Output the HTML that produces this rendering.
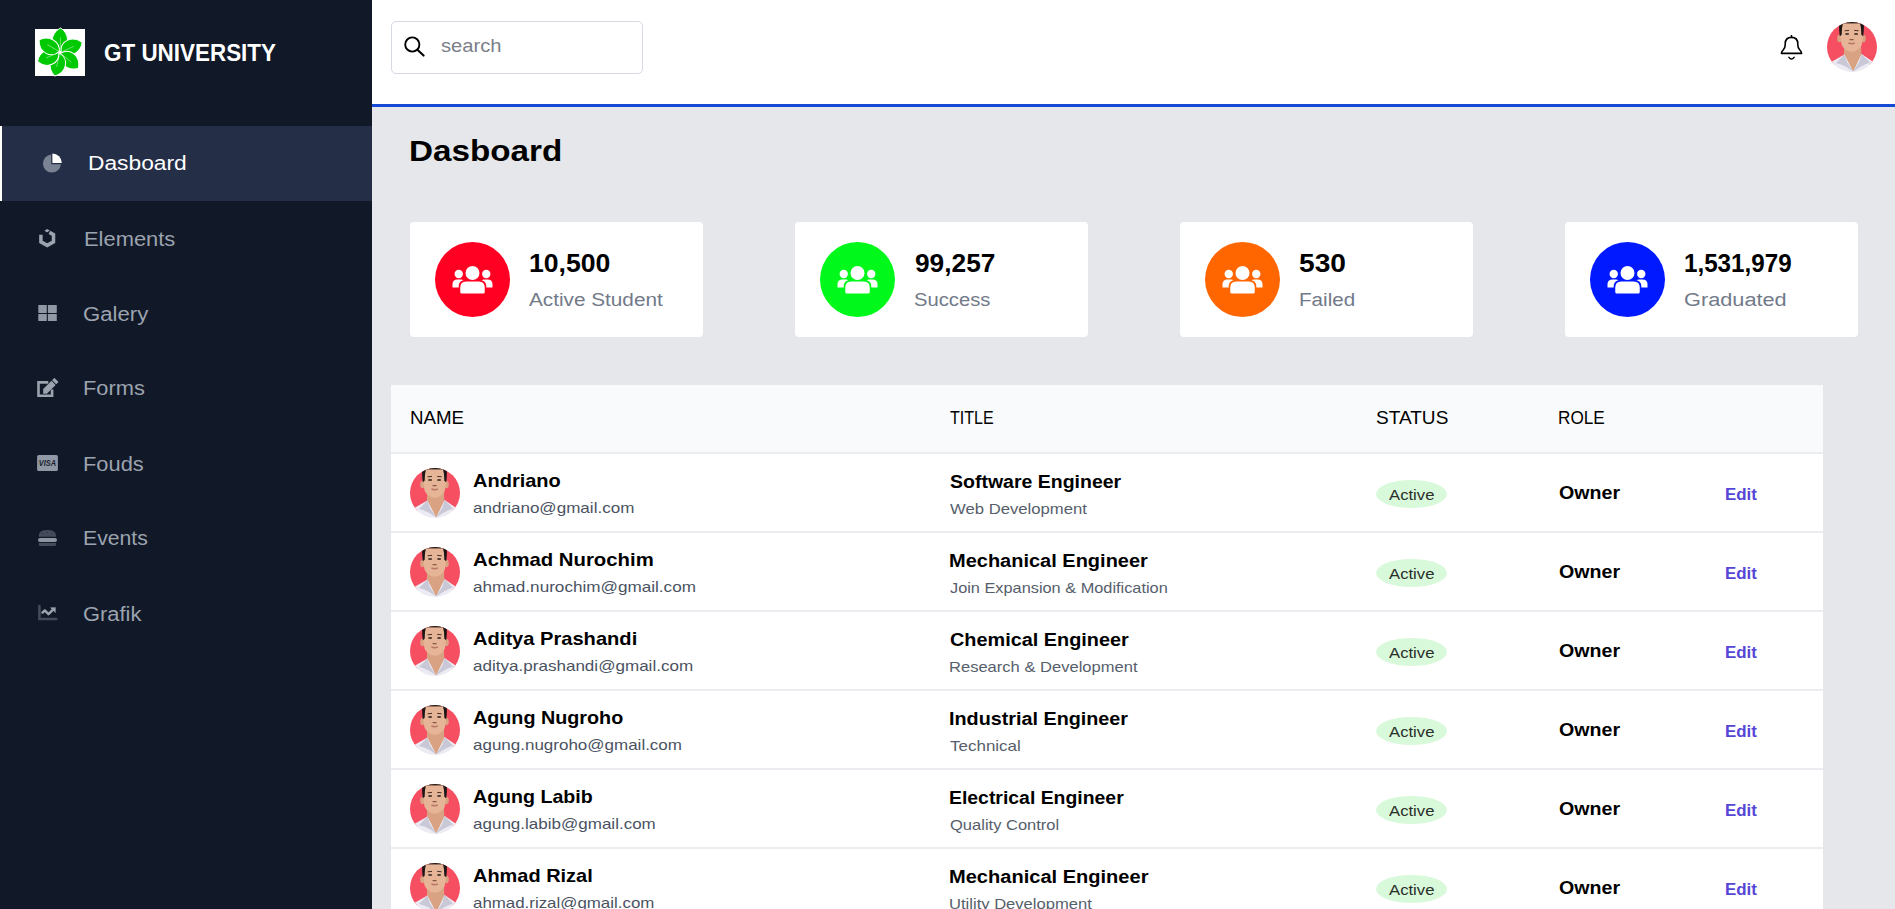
<!DOCTYPE html>
<html><head><meta charset="utf-8">
<style>
*{box-sizing:border-box;margin:0;padding:0}
html,body{width:1895px;height:909px;overflow:hidden;background:#e5e7eb;font-family:"Liberation Sans",sans-serif}
.tx{position:absolute;white-space:nowrap}
.b{position:absolute}
</style></head><body>
<svg width="0" height="0" style="position:absolute">
<defs>
<clipPath id="cp"><circle cx="25" cy="25" r="25"/></clipPath>
<symbol id="face" viewBox="0 0 50 50">
<g clip-path="url(#cp)">
<rect width="50" height="43" fill="#f64f62"/>
<path d="M17.2 24 L34 24 L34.5 40 L26.5 50 L16.5 40Z" fill="#d9a283"/>
<path d="M0 41.5 Q3 39.5 5.6 39.2 L17.4 32.4 L26.2 49.5 L34.6 32 L45.2 39.2 Q48 40 50 41.5 L50 50 L0 50Z" fill="#ecebf3"/>
<path d="M17.4 32.4 L20 40 L26.2 49.5 L19.5 45 Q14 42 9 41 Z" fill="#c9c8d6"/>
<path d="M34.6 32 L32.2 40 L26.2 49.5 L33 45 Q38 42 43 40.5 Z" fill="#c9c8d6"/>
<ellipse cx="12.4" cy="16.5" rx="2.2" ry="3.8" fill="#d9a283"/>
<ellipse cx="36.6" cy="16.5" rx="2.2" ry="3.8" fill="#d9a283"/>
<path d="M13 2 Q13 -2 24.5 -2 Q36 -2 36 2 L35.7 18 Q35 28.5 24.8 29.8 Q14.5 28.5 13.6 18Z" fill="#e6b496"/>
<path d="M12.4 -1 L16.6 -1 Q14.6 5 14.7 12.8 L12.8 14.2 Q11.6 6 12.4 -1Z" fill="#1c1716"/>
<path d="M36.6 -1 L32.4 -1 Q34.4 5 34.3 12.8 L36.2 14.2 Q37.4 6 36.6 -1Z" fill="#1c1716"/>
<rect x="12.6" y="-1" width="24" height="2.4" fill="#1c1716"/>
<path d="M17.6 8.8 L22 8.4 M27.2 8.4 L31.6 8.8" stroke="#4a3028" stroke-width="1"/>
<path d="M18.4 12 L21.8 12 M27.4 12 L30.8 12" stroke="#2a1e1c" stroke-width="1.4"/>
<path d="M22.6 17.6 L26.6 17.6" stroke="#8a5a48" stroke-width="1.2"/>
<path d="M21.4 21 Q24.6 22.4 27.8 21" stroke="#b97566" stroke-width="1.5" fill="none"/>
</g>
</symbol>
<symbol id="users" viewBox="0 0 41 30">
<path d="M0.5 22.5 L0.5 19.5 Q0.5 14.5 5.5 14.5 L9 14.5 Q12 14.5 12 17.5 L12 22.5Z" fill="#fff"/>
<path d="M40.5 22.5 L40.5 19.5 Q40.5 14.5 35.5 14.5 L32 14.5 Q29 14.5 29 17.5 L29 22.5Z" fill="#fff"/>
<path d="M6.7 30 L6.7 21.5 Q6.7 14.9 13.3 14.9 L27.7 14.9 Q34.3 14.9 34.3 21.5 L34.3 30Z" fill="currentColor"/>
<path d="M8.25 27 L8.25 22.5 Q8.25 16.5 14.25 16.5 L26.75 16.5 Q32.75 16.5 32.75 22.5 L32.75 27 Q32.75 28.5 31.25 28.5 L9.75 28.5 Q8.25 28.5 8.25 27Z" fill="#fff"/>
<circle cx="6.75" cy="9" r="4.2" fill="#fff"/>
<circle cx="34.25" cy="9" r="4.2" fill="#fff"/>
<circle cx="20.5" cy="8" r="7" fill="#fff"/>
</symbol>
</defs>
</svg>
<!-- sidebar -->
<div class="b" style="left:0;top:0;width:372px;height:909px;background:#111827"></div>
<div class="b" style="left:35px;top:29px;width:50px;height:47px;background:#fff"></div>
<div class="b" style="left:0;top:126px;width:372px;height:75px;background:#242e47"></div>
<div class="b" style="left:0;top:126px;width:2px;height:75px;background:#fff"></div>
<!-- header -->
<div class="b" style="left:372px;top:0;width:1523px;height:104px;background:#fff"></div>
<div class="b" style="left:372px;top:104px;width:1523px;height:3px;background:#144ad4"></div>
<div class="b" style="left:391px;top:21px;width:252px;height:53px;border:1px solid #d5d9e2;border-radius:5px;background:#fff"></div>
<!-- cards -->
<div class="b" style="left:410px;top:222px;width:293px;height:115px;background:#fff;border-radius:4px"></div>
<div class="b" style="left:795px;top:222px;width:293px;height:115px;background:#fff;border-radius:4px"></div>
<div class="b" style="left:1180px;top:222px;width:293px;height:115px;background:#fff;border-radius:4px"></div>
<div class="b" style="left:1565px;top:222px;width:293px;height:115px;background:#fff;border-radius:4px"></div>
<div class="b" style="left:435px;top:242px;width:75px;height:75px;border-radius:50%;background:#ff0022"></div>
<div class="b" style="left:820px;top:242px;width:75px;height:75px;border-radius:50%;background:#00f81a"></div>
<div class="b" style="left:1205px;top:242px;width:75px;height:75px;border-radius:50%;background:#ff6600"></div>
<div class="b" style="left:1590px;top:242px;width:75px;height:75px;border-radius:50%;background:#0019ff"></div>
<svg class="b" style="left:452px;top:265px;color:#ff0022;overflow:visible" width="41" height="30"><use href="#users"/></svg>
<svg class="b" style="left:837px;top:265px;color:#00f81a;overflow:visible" width="41" height="30"><use href="#users"/></svg>
<svg class="b" style="left:1222px;top:265px;color:#ff6600;overflow:visible" width="41" height="30"><use href="#users"/></svg>
<svg class="b" style="left:1607px;top:265px;color:#0019ff;overflow:visible" width="41" height="30"><use href="#users"/></svg>
<!-- table -->
<div class="b" style="left:391px;top:385px;width:1432px;height:524px;background:#fff"></div>
<div class="b" style="left:391px;top:385px;width:1432px;height:67px;background:#f9fafb"></div>
<div class="b" style="left:391px;top:452px;width:1432px;height:2px;background:#ebedf0"></div>
<div class="b" style="left:391px;top:531px;width:1432px;height:2px;background:#ebedf0"></div>
<div class="b" style="left:391px;top:610px;width:1432px;height:2px;background:#ebedf0"></div>
<div class="b" style="left:391px;top:689px;width:1432px;height:2px;background:#ebedf0"></div>
<div class="b" style="left:391px;top:768px;width:1432px;height:2px;background:#ebedf0"></div>
<div class="b" style="left:391px;top:847px;width:1432px;height:2px;background:#ebedf0"></div>
<svg class="b" style="left:410px;top:468px" width="50" height="50" viewBox="0 0 50 50"><use href="#face"/></svg>
<div class="b" style="left:1376px;top:480px;width:71px;height:28px;border-radius:50%;background:#d9f9db"></div>
<svg class="b" style="left:410px;top:547px" width="50" height="50" viewBox="0 0 50 50"><use href="#face"/></svg>
<div class="b" style="left:1376px;top:559px;width:71px;height:28px;border-radius:50%;background:#d9f9db"></div>
<svg class="b" style="left:410px;top:626px" width="50" height="50" viewBox="0 0 50 50"><use href="#face"/></svg>
<div class="b" style="left:1376px;top:638px;width:71px;height:28px;border-radius:50%;background:#d9f9db"></div>
<svg class="b" style="left:410px;top:705px" width="50" height="50" viewBox="0 0 50 50"><use href="#face"/></svg>
<div class="b" style="left:1376px;top:717px;width:71px;height:28px;border-radius:50%;background:#d9f9db"></div>
<svg class="b" style="left:410px;top:784px" width="50" height="50" viewBox="0 0 50 50"><use href="#face"/></svg>
<div class="b" style="left:1376px;top:796px;width:71px;height:28px;border-radius:50%;background:#d9f9db"></div>
<svg class="b" style="left:410px;top:863px" width="50" height="50" viewBox="0 0 50 50"><use href="#face"/></svg>
<div class="b" style="left:1376px;top:875px;width:71px;height:28px;border-radius:50%;background:#d9f9db"></div>

<!-- icons -->
<svg class="b" style="left:0;top:0;overflow:visible" width="1895" height="909">
<g transform="translate(60 52.3)">
<g id="petal"><path d="M0.5 -1 C-11 -5 -10 -19 0.6 -24.3 C10.5 -18 9 -5 0.5 -1Z" fill="#00c803" stroke="#fff" stroke-width="1"/><path d="M0.3 -2 L0.5 -15" stroke="#fff" stroke-width="0.7" opacity="0.55"/></g>
<use href="#petal" transform="rotate(64.6)"/>
<use href="#petal" transform="rotate(129.4)"/>
<use href="#petal" transform="rotate(190.8)"/>
<use href="#petal" transform="rotate(246)"/>
<use href="#petal" transform="rotate(299.3)"/>
</g>
<!-- pie -->
<path d="M51.2 164.3 L51.2 154.6 A9 9 0 1 0 60.9 164.3Z" fill="#7b8294"/>
<path d="M52.4 162.9 L52.4 153.6 A9.4 9.4 0 0 1 61.8 162.9Z" fill="#fff"/>
<!-- uikit -->
<path d="M40.9 234.8 L40.9 241.9 L47.2 245.4 L53.5 241.9 L53.5 234.6 L49.4 232.4" fill="none" stroke="#9ca3af" stroke-width="3.5" stroke-linejoin="miter"/>
<path d="M44.4 230.8 L47.2 229.1 L50 230.8 L47.2 232.5Z" fill="#9ca3af"/><path d="M46 233.6 L49.6 231.4" stroke="#111827" stroke-width="0.9"/>
<!-- th-large -->
<rect x="38.3" y="304.9" width="8.5" height="8" rx="0.6" fill="#9097a5"/>
<rect x="47.9" y="304.9" width="8.9" height="8" rx="0.6" fill="#9097a5"/>
<rect x="38.3" y="313.9" width="8.5" height="7.1" rx="0.6" fill="#9097a5"/>
<rect x="47.9" y="313.9" width="8.9" height="7.1" rx="0.6" fill="#9097a5"/>
<!-- edit -->
<path d="M48.3 382.4 L38.5 382.4 L38.5 395.8 L52.1 395.8 L52.1 389.6" fill="none" stroke="#9ca3af" stroke-width="2.6"/>
<path d="M43.2 389.1 L51.5 380.8 L55.6 384.9 L46.9 393.7 L43.2 393.7Z" fill="#9ca3af"/>
<path d="M52.1 380.2 L54 378.3 Q54.4 377.9 54.8 378.3 L58.1 381.6 Q58.5 382 58.1 382.4 L56.2 384.3Z" fill="#9ca3af"/>
<!-- visa -->
<rect x="37.1" y="454.9" width="20.8" height="16.1" rx="1.6" fill="#9097a5"/>
<text x="38.8" y="466" font-family="Liberation Sans" font-weight="bold" font-style="italic" font-size="8.2" fill="#1a1f2e" textLength="17.2" lengthAdjust="spacingAndGlyphs">VISA</text>
<!-- burger -->
<path d="M38.8 536.8 L38.8 535.5 Q38.8 530 47.4 530 Q56 530 56 535.5 L56 536.8Z" fill="#444b5a"/>
<circle cx="42.7" cy="533.5" r="0.6" fill="#2b3142"/><circle cx="47.4" cy="532.4" r="0.6" fill="#2b3142"/><circle cx="51.8" cy="533.5" r="0.6" fill="#2b3142"/>
<rect x="38" y="537.9" width="19" height="4" rx="2" fill="#8d94a2"/>
<path d="M38.8 543 L56 543 L56 544.5 Q56 546 54.5 546 L40.3 546 Q38.8 546 38.8 544.5Z" fill="#444b5a"/>
<!-- chart -->
<path d="M39.4 606.1 L39.4 619 L56.3 619" fill="none" stroke="#444b5a" stroke-width="2.6" stroke-linecap="round"/>
<path d="M42.5 612.7 L44.8 610.4 L48.5 614.2 L52.5 610.2" fill="none" stroke="#9ca3af" stroke-width="2.4" stroke-linejoin="round" stroke-linecap="round"/>
<path d="M50 607.5 L55.6 607.3 L55.6 612.9Z" fill="#9ca3af"/>
<!-- search -->
<circle cx="412.3" cy="44.5" r="7.1" fill="none" stroke="#000" stroke-width="1.9"/>
<path d="M417.4 49.7 L423.6 55.6" stroke="#000" stroke-width="2.1" stroke-linecap="round"/>
<!-- bell -->
<path d="M1781.4 53.4 Q1781.4 51.6 1783.2 50 Q1785.2 48.2 1785.2 44.8 L1785.2 43.8 Q1785.2 37.4 1791.5 37.4 Q1797.8 37.4 1797.8 43.8 L1797.8 44.8 Q1797.8 48.2 1799.8 50 Q1801.6 51.6 1801.6 53.4Z" fill="none" stroke="#000" stroke-width="1.6" stroke-linejoin="round"/>
<path d="M1791.5 35 L1791.5 37.4" stroke="#000" stroke-width="1.5"/>
<path d="M1788.9 57.4 Q1791.5 60.8 1794.1 57.4" fill="none" stroke="#000" stroke-width="1.5" stroke-linecap="round"/>
</svg>
<svg class="b" style="left:1827px;top:22px" width="50" height="50" viewBox="0 0 50 50"><use href="#face"/></svg>
<div class="tx" id="brand" style="left:104.00px;top:40.88px;font:bold 24px 'Liberation Sans',sans-serif;line-height:1;color:#fff;letter-spacing:0.000px;transform:scaleX(0.9348);transform-origin:0 0">GT UNIVERSITY</div>
<div class="tx" id="nav0" style="left:88.40px;top:153.00px;font:20px 'Liberation Sans',sans-serif;line-height:1;color:#fff;letter-spacing:0.000px;transform:scaleX(1.1389);transform-origin:0 0">Dasboard</div>
<div class="tx" id="nav1" style="left:83.70px;top:229.10px;font:20px 'Liberation Sans',sans-serif;line-height:1;color:#9ca3af;letter-spacing:0.000px;transform:scaleX(1.0952);transform-origin:0 0">Elements</div>
<div class="tx" id="nav2" style="left:83.10px;top:304.20px;font:20px 'Liberation Sans',sans-serif;line-height:1;color:#9ca3af;letter-spacing:0.000px;transform:scaleX(1.1087);transform-origin:0 0">Galery</div>
<div class="tx" id="nav3" style="left:82.90px;top:378.40px;font:20px 'Liberation Sans',sans-serif;line-height:1;color:#9ca3af;letter-spacing:0.000px;transform:scaleX(1.0911);transform-origin:0 0">Forms</div>
<div class="tx" id="nav4" style="left:82.90px;top:454.20px;font:20px 'Liberation Sans',sans-serif;line-height:1;color:#9ca3af;letter-spacing:0.000px;transform:scaleX(1.0926);transform-origin:0 0">Fouds</div>
<div class="tx" id="nav5" style="left:82.90px;top:528.40px;font:20px 'Liberation Sans',sans-serif;line-height:1;color:#9ca3af;letter-spacing:0.000px;transform:scaleX(1.0602);transform-origin:0 0">Events</div>
<div class="tx" id="nav6" style="left:82.90px;top:604.20px;font:20px 'Liberation Sans',sans-serif;line-height:1;color:#9ca3af;letter-spacing:0.000px;transform:scaleX(1.0943);transform-origin:0 0">Grafik</div>
<div class="tx" id="search" style="left:441.30px;top:37.26px;font:18px 'Liberation Sans',sans-serif;line-height:1;color:#7a7f89;letter-spacing:0.000px;transform:scaleX(1.1209);transform-origin:0 0">search</div>
<div class="tx" id="h1" style="left:408.50px;top:136.40px;font:bold 30px 'Liberation Sans',sans-serif;line-height:1;color:#000;letter-spacing:0.000px;transform:scaleX(1.1074);transform-origin:0 0">Dasboard</div>
<div class="tx" id="cn0" style="left:528.50px;top:251.25px;font:bold 25px 'Liberation Sans',sans-serif;line-height:1;color:#000;letter-spacing:0.000px;transform:scaleX(1.0641);transform-origin:0 0">10,500</div>
<div class="tx" id="cl0" style="left:529.30px;top:290.66px;font:18px 'Liberation Sans',sans-serif;line-height:1;color:#727a89;letter-spacing:0.000px;transform:scaleX(1.1522);transform-origin:0 0">Active Student</div>
<div class="tx" id="cn1" style="left:914.80px;top:251.25px;font:bold 25px 'Liberation Sans',sans-serif;line-height:1;color:#000;letter-spacing:0.000px;transform:scaleX(1.0509);transform-origin:0 0">99,257</div>
<div class="tx" id="cl1" style="left:914.00px;top:290.66px;font:18px 'Liberation Sans',sans-serif;line-height:1;color:#727a89;letter-spacing:0.000px;transform:scaleX(1.1225);transform-origin:0 0">Success</div>
<div class="tx" id="cn2" style="left:1299.30px;top:251.25px;font:bold 25px 'Liberation Sans',sans-serif;line-height:1;color:#000;letter-spacing:0.000px;transform:scaleX(1.1271);transform-origin:0 0">530</div>
<div class="tx" id="cl2" style="left:1298.50px;top:290.66px;font:18px 'Liberation Sans',sans-serif;line-height:1;color:#727a89;letter-spacing:0.000px;transform:scaleX(1.1450);transform-origin:0 0">Failed</div>
<div class="tx" id="cn3" style="left:1683.60px;top:251.25px;font:bold 25px 'Liberation Sans',sans-serif;line-height:1;color:#000;letter-spacing:0.000px;transform:scaleX(0.9673);transform-origin:0 0">1,531,979</div>
<div class="tx" id="cl3" style="left:1683.60px;top:290.66px;font:18px 'Liberation Sans',sans-serif;line-height:1;color:#727a89;letter-spacing:0.000px;transform:scaleX(1.2072);transform-origin:0 0">Graduated</div>
<div class="tx" id="thName" style="left:409.70px;top:407.73px;font:19px 'Liberation Sans',sans-serif;line-height:1;color:#000;letter-spacing:0.000px;transform:scaleX(0.9853);transform-origin:0 0">NAME</div>
<div class="tx" id="thTitle" style="left:949.60px;top:407.73px;font:19px 'Liberation Sans',sans-serif;line-height:1;color:#000;letter-spacing:0.000px;transform:scaleX(0.8436);transform-origin:0 0">TITLE</div>
<div class="tx" id="thStatus" style="left:1375.80px;top:407.73px;font:19px 'Liberation Sans',sans-serif;line-height:1;color:#000;letter-spacing:0.000px;transform:scaleX(1.0029);transform-origin:0 0">STATUS</div>
<div class="tx" id="thRole" style="left:1558.20px;top:407.73px;font:19px 'Liberation Sans',sans-serif;line-height:1;color:#000;letter-spacing:0.000px;transform:scaleX(0.9020);transform-origin:0 0">ROLE</div>
<div class="tx" id="nm0" style="left:472.60px;top:471.23px;font:bold 19px 'Liberation Sans',sans-serif;line-height:1;color:#000;letter-spacing:0.000px;transform:scaleX(1.0531);transform-origin:0 0">Andriano</div>
<div class="tx" id="em0" style="left:472.60px;top:499.65px;font:15px 'Liberation Sans',sans-serif;line-height:1;color:#4a5262;letter-spacing:0.000px;transform:scaleX(1.1367);transform-origin:0 0">andriano@gmail.com</div>
<div class="tx" id="ti0" style="left:949.60px;top:472.66px;font:bold 18px 'Liberation Sans',sans-serif;line-height:1;color:#000;letter-spacing:0.000px;transform:scaleX(1.0830);transform-origin:0 0">Software Engineer</div>
<div class="tx" id="su0" style="left:949.60px;top:500.55px;font:15px 'Liberation Sans',sans-serif;line-height:1;color:#565e6b;letter-spacing:0.000px;transform:scaleX(1.1122);transform-origin:0 0">Web Development</div>
<div class="tx" id="pa0" style="left:1389.20px;top:486.65px;font:15px 'Liberation Sans',sans-serif;line-height:1;color:#2a2f2a;letter-spacing:0.000px;transform:scaleX(1.1123);transform-origin:0 0">Active</div>
<div class="tx" id="ow0" style="left:1559.30px;top:483.96px;font:bold 18px 'Liberation Sans',sans-serif;line-height:1;color:#000;letter-spacing:0.000px;transform:scaleX(1.0895);transform-origin:0 0">Owner</div>
<div class="tx" id="ed0" style="left:1725.20px;top:485.79px;font:bold 17px 'Liberation Sans',sans-serif;line-height:1;color:#5546d6;letter-spacing:0.000px;transform:scaleX(0.9943);transform-origin:0 0">Edit</div>
<div class="tx" id="nm1" style="left:472.60px;top:550.23px;font:bold 19px 'Liberation Sans',sans-serif;line-height:1;color:#000;letter-spacing:0.000px;transform:scaleX(1.0699);transform-origin:0 0">Achmad Nurochim</div>
<div class="tx" id="em1" style="left:472.60px;top:578.65px;font:15px 'Liberation Sans',sans-serif;line-height:1;color:#4a5262;letter-spacing:0.000px;transform:scaleX(1.1416);transform-origin:0 0">ahmad.nurochim@gmail.com</div>
<div class="tx" id="ti1" style="left:948.80px;top:551.66px;font:bold 18px 'Liberation Sans',sans-serif;line-height:1;color:#000;letter-spacing:0.000px;transform:scaleX(1.1106);transform-origin:0 0">Mechanical Engineer</div>
<div class="tx" id="su1" style="left:949.60px;top:579.55px;font:15px 'Liberation Sans',sans-serif;line-height:1;color:#565e6b;letter-spacing:0.000px;transform:scaleX(1.0880);transform-origin:0 0">Join Expansion &amp; Modification</div>
<div class="tx" id="pa1" style="left:1389.20px;top:565.65px;font:15px 'Liberation Sans',sans-serif;line-height:1;color:#2a2f2a;letter-spacing:0.000px;transform:scaleX(1.1123);transform-origin:0 0">Active</div>
<div class="tx" id="ow1" style="left:1559.30px;top:562.96px;font:bold 18px 'Liberation Sans',sans-serif;line-height:1;color:#000;letter-spacing:0.000px;transform:scaleX(1.0895);transform-origin:0 0">Owner</div>
<div class="tx" id="ed1" style="left:1725.20px;top:564.79px;font:bold 17px 'Liberation Sans',sans-serif;line-height:1;color:#5546d6;letter-spacing:0.000px;transform:scaleX(0.9943);transform-origin:0 0">Edit</div>
<div class="tx" id="nm2" style="left:472.60px;top:629.23px;font:bold 19px 'Liberation Sans',sans-serif;line-height:1;color:#000;letter-spacing:0.000px;transform:scaleX(1.0581);transform-origin:0 0">Aditya Prashandi</div>
<div class="tx" id="em2" style="left:472.60px;top:657.65px;font:15px 'Liberation Sans',sans-serif;line-height:1;color:#4a5262;letter-spacing:0.000px;transform:scaleX(1.1368);transform-origin:0 0">aditya.prashandi@gmail.com</div>
<div class="tx" id="ti2" style="left:949.60px;top:630.66px;font:bold 18px 'Liberation Sans',sans-serif;line-height:1;color:#000;letter-spacing:0.000px;transform:scaleX(1.1031);transform-origin:0 0">Chemical Engineer</div>
<div class="tx" id="su2" style="left:948.80px;top:658.55px;font:15px 'Liberation Sans',sans-serif;line-height:1;color:#565e6b;letter-spacing:0.000px;transform:scaleX(1.1030);transform-origin:0 0">Research &amp; Development</div>
<div class="tx" id="pa2" style="left:1389.20px;top:644.65px;font:15px 'Liberation Sans',sans-serif;line-height:1;color:#2a2f2a;letter-spacing:0.000px;transform:scaleX(1.1123);transform-origin:0 0">Active</div>
<div class="tx" id="ow2" style="left:1559.30px;top:641.96px;font:bold 18px 'Liberation Sans',sans-serif;line-height:1;color:#000;letter-spacing:0.000px;transform:scaleX(1.0895);transform-origin:0 0">Owner</div>
<div class="tx" id="ed2" style="left:1725.20px;top:643.79px;font:bold 17px 'Liberation Sans',sans-serif;line-height:1;color:#5546d6;letter-spacing:0.000px;transform:scaleX(0.9943);transform-origin:0 0">Edit</div>
<div class="tx" id="nm3" style="left:472.60px;top:708.23px;font:bold 19px 'Liberation Sans',sans-serif;line-height:1;color:#000;letter-spacing:0.000px;transform:scaleX(1.0389);transform-origin:0 0">Agung Nugroho</div>
<div class="tx" id="em3" style="left:472.60px;top:736.65px;font:15px 'Liberation Sans',sans-serif;line-height:1;color:#4a5262;letter-spacing:0.000px;transform:scaleX(1.1326);transform-origin:0 0">agung.nugroho@gmail.com</div>
<div class="tx" id="ti3" style="left:948.80px;top:709.66px;font:bold 18px 'Liberation Sans',sans-serif;line-height:1;color:#000;letter-spacing:0.000px;transform:scaleX(1.0982);transform-origin:0 0">Industrial Engineer</div>
<div class="tx" id="su3" style="left:949.60px;top:737.55px;font:15px 'Liberation Sans',sans-serif;line-height:1;color:#565e6b;letter-spacing:0.000px;transform:scaleX(1.1323);transform-origin:0 0">Technical</div>
<div class="tx" id="pa3" style="left:1389.20px;top:723.65px;font:15px 'Liberation Sans',sans-serif;line-height:1;color:#2a2f2a;letter-spacing:0.000px;transform:scaleX(1.1123);transform-origin:0 0">Active</div>
<div class="tx" id="ow3" style="left:1559.30px;top:720.96px;font:bold 18px 'Liberation Sans',sans-serif;line-height:1;color:#000;letter-spacing:0.000px;transform:scaleX(1.0895);transform-origin:0 0">Owner</div>
<div class="tx" id="ed3" style="left:1725.20px;top:722.79px;font:bold 17px 'Liberation Sans',sans-serif;line-height:1;color:#5546d6;letter-spacing:0.000px;transform:scaleX(0.9943);transform-origin:0 0">Edit</div>
<div class="tx" id="nm4" style="left:472.60px;top:787.23px;font:bold 19px 'Liberation Sans',sans-serif;line-height:1;color:#000;letter-spacing:0.000px;transform:scaleX(1.0310);transform-origin:0 0">Agung Labib</div>
<div class="tx" id="em4" style="left:472.60px;top:815.65px;font:15px 'Liberation Sans',sans-serif;line-height:1;color:#4a5262;letter-spacing:0.000px;transform:scaleX(1.1342);transform-origin:0 0">agung.labib@gmail.com</div>
<div class="tx" id="ti4" style="left:948.80px;top:788.66px;font:bold 18px 'Liberation Sans',sans-serif;line-height:1;color:#000;letter-spacing:0.000px;transform:scaleX(1.0778);transform-origin:0 0">Electrical Engineer</div>
<div class="tx" id="su4" style="left:949.60px;top:816.55px;font:15px 'Liberation Sans',sans-serif;line-height:1;color:#565e6b;letter-spacing:0.000px;transform:scaleX(1.1010);transform-origin:0 0">Quality Control</div>
<div class="tx" id="pa4" style="left:1389.20px;top:802.65px;font:15px 'Liberation Sans',sans-serif;line-height:1;color:#2a2f2a;letter-spacing:0.000px;transform:scaleX(1.1123);transform-origin:0 0">Active</div>
<div class="tx" id="ow4" style="left:1559.30px;top:799.96px;font:bold 18px 'Liberation Sans',sans-serif;line-height:1;color:#000;letter-spacing:0.000px;transform:scaleX(1.0895);transform-origin:0 0">Owner</div>
<div class="tx" id="ed4" style="left:1725.20px;top:801.79px;font:bold 17px 'Liberation Sans',sans-serif;line-height:1;color:#5546d6;letter-spacing:0.000px;transform:scaleX(0.9943);transform-origin:0 0">Edit</div>
<div class="tx" id="nm5" style="left:472.60px;top:866.23px;font:bold 19px 'Liberation Sans',sans-serif;line-height:1;color:#000;letter-spacing:0.000px;transform:scaleX(1.0496);transform-origin:0 0">Ahmad Rizal</div>
<div class="tx" id="em5" style="left:472.60px;top:894.65px;font:15px 'Liberation Sans',sans-serif;line-height:1;color:#4a5262;letter-spacing:0.000px;transform:scaleX(1.1255);transform-origin:0 0">ahmad.rizal@gmail.com</div>
<div class="tx" id="ti5" style="left:948.80px;top:867.66px;font:bold 18px 'Liberation Sans',sans-serif;line-height:1;color:#000;letter-spacing:0.000px;transform:scaleX(1.1140);transform-origin:0 0">Mechanical Engineer</div>
<div class="tx" id="su5" style="left:948.80px;top:895.55px;font:15px 'Liberation Sans',sans-serif;line-height:1;color:#565e6b;letter-spacing:0.000px;transform:scaleX(1.1054);transform-origin:0 0">Utility Development</div>
<div class="tx" id="pa5" style="left:1389.20px;top:881.65px;font:15px 'Liberation Sans',sans-serif;line-height:1;color:#2a2f2a;letter-spacing:0.000px;transform:scaleX(1.1123);transform-origin:0 0">Active</div>
<div class="tx" id="ow5" style="left:1559.30px;top:878.96px;font:bold 18px 'Liberation Sans',sans-serif;line-height:1;color:#000;letter-spacing:0.000px;transform:scaleX(1.0895);transform-origin:0 0">Owner</div>
<div class="tx" id="ed5" style="left:1725.20px;top:880.79px;font:bold 17px 'Liberation Sans',sans-serif;line-height:1;color:#5546d6;letter-spacing:0.000px;transform:scaleX(0.9943);transform-origin:0 0">Edit</div>

</body></html>
